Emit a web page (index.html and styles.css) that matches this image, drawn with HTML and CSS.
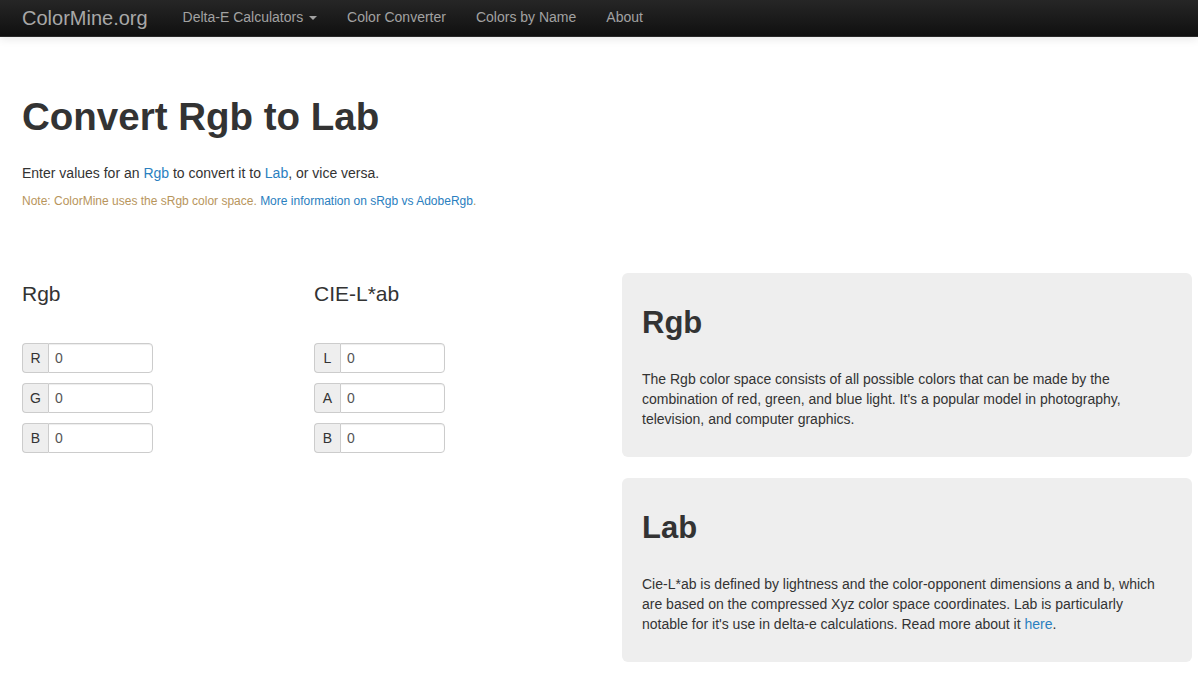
FILE: index.html
```html
<!DOCTYPE html>
<html lang="en">
<head>
  <meta charset="UTF-8" />
  <title>Convert Rgb to Lab - ColorMine.org</title>
  <link rel="stylesheet" href="styles.css">
</head>
<body>
  <nav class="navbar">
    <a class="brand" href="#">ColorMine.org</a>
    <ul class="nav">
      <li><a href="#">Delta-E Calculators <span class="caret"></span></a></li>
      <li><a href="#">Color Converter</a></li>
      <li><a href="#">Colors by Name</a></li>
      <li><a href="#">About</a></li>
    </ul>
  </nav>

  <div class="container">
    <h1>Convert Rgb to Lab</h1>
    <p>Enter values for an <a href="#">Rgb</a> to convert it to <a href="#">Lab</a>, or vice versa.</p>
    <p class="note">Note: ColorMine uses the sRgb color space. <a href="#">More information on sRgb vs AdobeRgb</a>.</p>

    <div class="row">
      <div class="converter">
        <div class="space">
          <h3>Rgb</h3>
          <div class="input-group"><span class="addon">R</span><input type="text" value="0" /></div>
          <div class="input-group"><span class="addon">G</span><input type="text" value="0" /></div>
          <div class="input-group"><span class="addon">B</span><input type="text" value="0" /></div>
        </div>
        <div class="space">
          <h3>CIE-L*ab</h3>
          <div class="input-group"><span class="addon">L</span><input type="text" value="0" /></div>
          <div class="input-group"><span class="addon">A</span><input type="text" value="0" /></div>
          <div class="input-group"><span class="addon">B</span><input type="text" value="0" /></div>
        </div>
      </div>

      <div class="info">
        <div class="well">
          <h2>Rgb</h2>
          <p>The Rgb color space consists of all possible colors that can be made by the combination of red, green, and blue light. It's a popular model in photography, television, and computer graphics.</p>
        </div>
        <div class="well">
          <h2>Lab</h2>
          <p>Cie-L*ab is defined by lightness and the color-opponent dimensions a and b, which are based on the compressed Xyz color space coordinates. Lab is particularly notable for it's use in delta-e calculations. Read more about it <a href="#">here</a>.</p>
        </div>
      </div>
    </div>
  </div>
</body>
</html>
```

FILE: styles.css
```css
body {
  font-family: "Liberation Sans", Arial, sans-serif;
  font-size: 14px;
  line-height: 20px;
  color: #333;
  background-color: #fff;
  margin: 0;
  padding: 0;
}

a {
  color: #2a80c0;
  text-decoration: none;
}

p {
  margin: 0 0 10px;
}

/* top bar */
.navbar {
  height: 36px;
  display: flex;
  align-items: center;
  padding-left: 22px;
  background-image: linear-gradient(to bottom, #262626, #101010);
  border-bottom: 1px solid #2a2a2a;
  box-shadow: 0 3px 8px rgba(0, 0, 0, 0.08);
}

.brand {
  font-size: 20px;
  line-height: 32px;
  color: #a8a8a8;
  margin-right: 20px;
}

.nav {
  list-style: none;
  display: flex;
  margin: 0;
  padding: 0;
}

.nav a {
  display: block;
  padding: 0 15px 3px;
  color: #a2a2a2;
  line-height: 30px;
}

.caret {
  display: inline-block;
  width: 0;
  height: 0;
  margin-left: 2px;
  vertical-align: middle;
  border-top: 4px solid #a2a2a2;
  border-left: 4px solid transparent;
  border-right: 4px solid transparent;
}

/* page */
.container {
  padding: 0 6px 0 22px;
}

h1 {
  font-size: 38.5px;
  font-weight: bold;
  line-height: 43px;
  margin: 58px 0 25px;
}

.note {
  font-size: 12px;
  line-height: 17px;
  color: #b8955c;
}

.row {
  display: grid;
  grid-template-columns: 570px 570px;
  column-gap: 30px;
  margin-top: 63px;
}

.converter {
  display: grid;
  grid-template-columns: 292px 1fr;
}

h3 {
  font-size: 21px;
  font-weight: normal;
  line-height: 23px;
  margin: 9px 0 38px;
}

.input-group {
  display: flex;
  width: 131px;
  height: 30px;
  margin-bottom: 10px;
}

.addon {
  width: 25px;
  display: flex;
  align-items: center;
  justify-content: center;
  background-color: #eee;
  border: 1px solid #ccc;
  border-right: 0;
  border-radius: 4px 0 0 4px;
  color: #333;
}

.input-group input {
  flex: 1;
  min-width: 0;
  box-sizing: border-box;
  height: 30px;
  margin: 0;
  padding: 0 6px;
  font-family: inherit;
  font-size: 14px;
  color: #555;
  border: 1px solid #ccc;
  border-radius: 0 4px 4px 0;
  box-shadow: inset 0 1px 1px rgba(0, 0, 0, 0.075);
}

.well {
  background-color: #eee;
  border-radius: 6px;
  padding: 33px 20px 18px;
  margin-bottom: 21px;
}

h2 {
  font-size: 31px;
  font-weight: bold;
  line-height: 34px;
  margin: 0 0 29px;
}
```
